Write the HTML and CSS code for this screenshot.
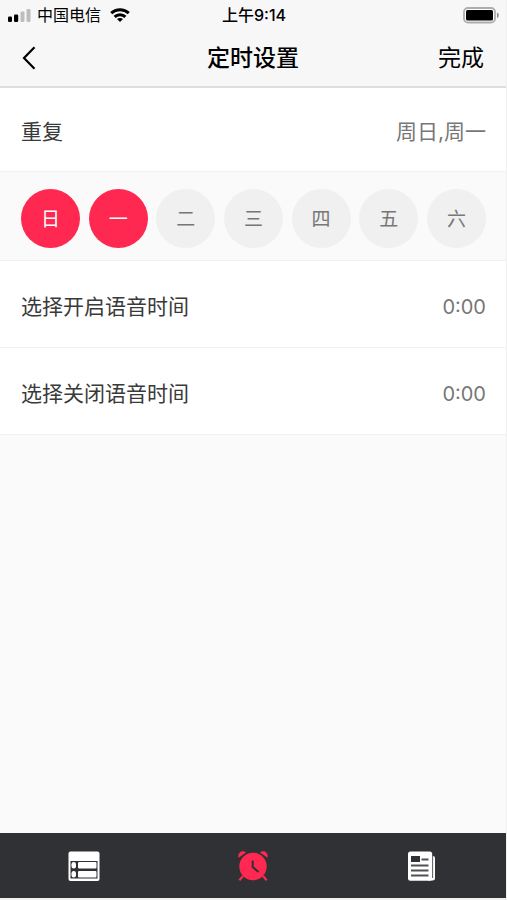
FILE: index.html
```html
<!DOCTYPE html>
<html lang="zh-CN">
<head>
<meta charset="utf-8">
<meta name="viewport" content="width=device-width, initial-scale=1">
<title>定时设置</title>
<link rel="stylesheet" href="styles.css">
</head>
<body>
<div class="app">
  <div class="status">
    <div class="status-left">
      <svg class="signal" viewBox="0 0 23 13" aria-hidden="true">
        <rect x="0" y="7.500" width="4" height="5.500" rx="1.2" fill="#000"/>
        <rect x="6" y="5.500" width="4.200" height="7.500" rx="1.2" fill="#000"/>
        <rect x="12.500" y="2.500" width="4" height="10.500" rx="1.200" fill="#bdbdbd"/>
        <rect x="18.500" y="0" width="4" height="13" rx="1.200" fill="#bdbdbd"/>
      </svg>
      <span>中国电信</span>
      <svg class="wifi" viewBox="0 0 20 14" aria-hidden="true">
        <g fill="none" stroke="#000" stroke-width="3">
          <path d="M1.200 5.200C6 .700 14 .700 18.800 5.200"/>
          <path d="M4.600 8.900C7.600 6 12.400 6 15.400 8.900"/>
        </g>
        <path d="M7 11.100C8.700 9.500 11.300 9.500 13 11.100L10 14Z"/>
      </svg>
    </div>
    <span class="clock">上午9:14</span>
    <svg class="battery" viewBox="0 0 37 17" aria-hidden="true">
      <rect x="1" y="1" width="31" height="14.500" rx="4" fill="#fff" stroke="#adadad" stroke-width="1.800"/>
      <rect x="3" y="3" width="27" height="10.500" rx="1.500" fill="#000"/>
      <path d="M34 5.500C36.300 6.200 36.300 10.300 34 11Z" fill="#8a8a8a"/>
    </svg>
  </div>
  <header class="nav">
    <button class="back" type="button" aria-label="返回">
      <svg viewBox="0 0 14 24" aria-hidden="true"><path d="M12.500 1.200L2 12L12.500 22.800" fill="none" stroke="#000" stroke-width="2.200"/></svg>
    </button>
    <h1>定时设置</h1>
    <button class="done" type="button">完成</button>
  </header>
  <main>
    <button class="row" type="button"><span>重复</span><span class="value">周日,周一</span></button>
    <div class="days">
      <button class="day on" type="button" aria-pressed="true">日</button>
      <button class="day on" type="button" aria-pressed="true">一</button>
      <button class="day" type="button" aria-pressed="false">二</button>
      <button class="day" type="button" aria-pressed="false">三</button>
      <button class="day" type="button" aria-pressed="false">四</button>
      <button class="day" type="button" aria-pressed="false">五</button>
      <button class="day" type="button" aria-pressed="false">六</button>
    </div>
    <button class="row tall" type="button"><span>选择开启语音时间</span><span class="value time">0:00</span></button>
    <button class="row tall" type="button"><span>选择关闭语音时间</span><span class="value time">0:00</span></button>
  </main>
  <nav class="tabs">
    <a href="#list" aria-label="列表">
      <svg viewBox="0 0 32 32" aria-hidden="true">
        <rect x=".500" y="1.500" width="31" height="29.500" rx="2" fill="#fff"/>
        <rect x="2.500" y="11" width="27" height="17.500" fill="#303134"/>
        <g fill="#fff">
          <rect x="3.500" y="12" width="4.500" height="6.500" rx="2.200"/><rect x="10" y="12" width="18.500" height="6.500" rx="1"/>
          <rect x="3.500" y="21" width="4.500" height="6.500" rx="2.200"/><rect x="10" y="21" width="18.500" height="6.500" rx="1"/>
        </g>
      </svg>
    </a>
    <a href="#alarm" aria-label="定时" aria-current="page">
      <svg viewBox="0 0 32 32" aria-hidden="true">
        <g fill="#ff2850">
          <circle cx="16" cy="16.500" r="13.700"/>
          <path d="M1.600 7.800C0 3 5.500-.800 9 2.600Z"/>
          <path d="M30.400 7.800C32 3 26.500-.800 23 2.600Z"/>
        </g>
        <path d="M6 26L2.400 30.200M26 26L29.600 30.200" stroke="#ff2850" stroke-width="2.200"/>
        <path d="M15.700 10.500V17L21.500 22" fill="none" stroke="#303134" stroke-width="2"/>
      </svg>
    </a>
    <a href="#news" aria-label="资讯">
      <svg viewBox="0 0 32 32" aria-hidden="true">
        <path d="M24 6H27Q29 6 29 8V28Q29 30.500 26.500 30.500H22Z" fill="#fff"/>
        <path d="M26.600 4V28" stroke="#303134" stroke-width="1"/>
        <rect x="2" y="1.500" width="24.200" height="29.300" rx="2.500" fill="#fff"/>
        <rect x="5" y="6" width="9" height="6" fill="#303134"/>
        <path d="M15.500 9.500H22.500M5 15.500H22.500M5 20.500H22.500M5 25.500H22.500" stroke="#505155" stroke-width="1.800"/>
      </svg>
    </a>
  </nav>
</div>
</body>
</html>
```
FILE: styles.css
```css
* { box-sizing: border-box; }

body {
  margin: 0;
  background: #f0f0f0;
  font-family: Inter, "Noto Sans CJK SC", sans-serif;
}

button {
  margin: 0;
  padding: 0;
  border: 0;
  background: none;
  font: inherit;
  color: inherit;
}

svg { display: block; }

.app {
  display: flex;
  flex-direction: column;
  min-height: 100vh;
  padding: 0 1px 2px 0;
}

.status,
.nav {
  display: grid;
  grid-template-columns: 1fr auto 1fr;
  align-items: center;
  background: #f7f7f7;
  color: #000;
}

.status {
  height: 30px;
  padding: 0 6px 0 8px;
  font-size: 16px;
  line-height: 24px;
}

.status-left {
  display: flex;
  align-items: center;
  gap: 6px;
}

.signal { width: 23px; height: 13px; }
.wifi { width: 20px; height: 14px; margin-left: 3px; }
.battery { width: 37px; height: 17px; justify-self: end; }
.clock { font-weight: 500; }

.nav {
  height: 58px;
  padding: 0 22px;
  border-bottom: 2px solid #dedede;
  font-size: 23px;
  line-height: 32px;
}

.nav h1 {
  margin: 0;
  font-size: 23px;
  font-weight: 500;
}

.back { justify-self: start; }
.back svg { width: 14px; height: 24px; }
.done { justify-self: end; }

main {
  flex: 1;
  background: #fafafa;
}

.row {
  display: flex;
  justify-content: space-between;
  align-items: center;
  width: 100%;
  height: 84px;
  padding: 4px 20px 0 21px;
  border-bottom: 1px solid #f2f2f2;
  background: #fff;
  color: #3a3a3a;
  font-size: 21px;
  line-height: 30px;
}

.tall { height: 87px; padding-top: 6px; }
.value { color: #777; }
.time { font-size: 20px; }

.days {
  display: flex;
  justify-content: space-between;
  align-items: center;
  height: 89px;
  padding: 4px 20px 0 21px;
  border-bottom: 1px solid #f0f0f0;
}

.day {
  width: 59px;
  height: 59px;
  padding-bottom: 2px;
  border-radius: 50%;
  background: #f0f0f0;
  color: #777;
  font-size: 19px;
}

.on {
  background: #ff2850;
  color: #fff;
}

.tabs {
  display: grid;
  grid-template-columns: repeat(3, 1fr);
  height: 65px;
  background: #303134;
}

.tabs a {
  display: flex;
  align-items: center;
  justify-content: center;
}

.tabs svg { width: 32px; height: 32px; }
```
